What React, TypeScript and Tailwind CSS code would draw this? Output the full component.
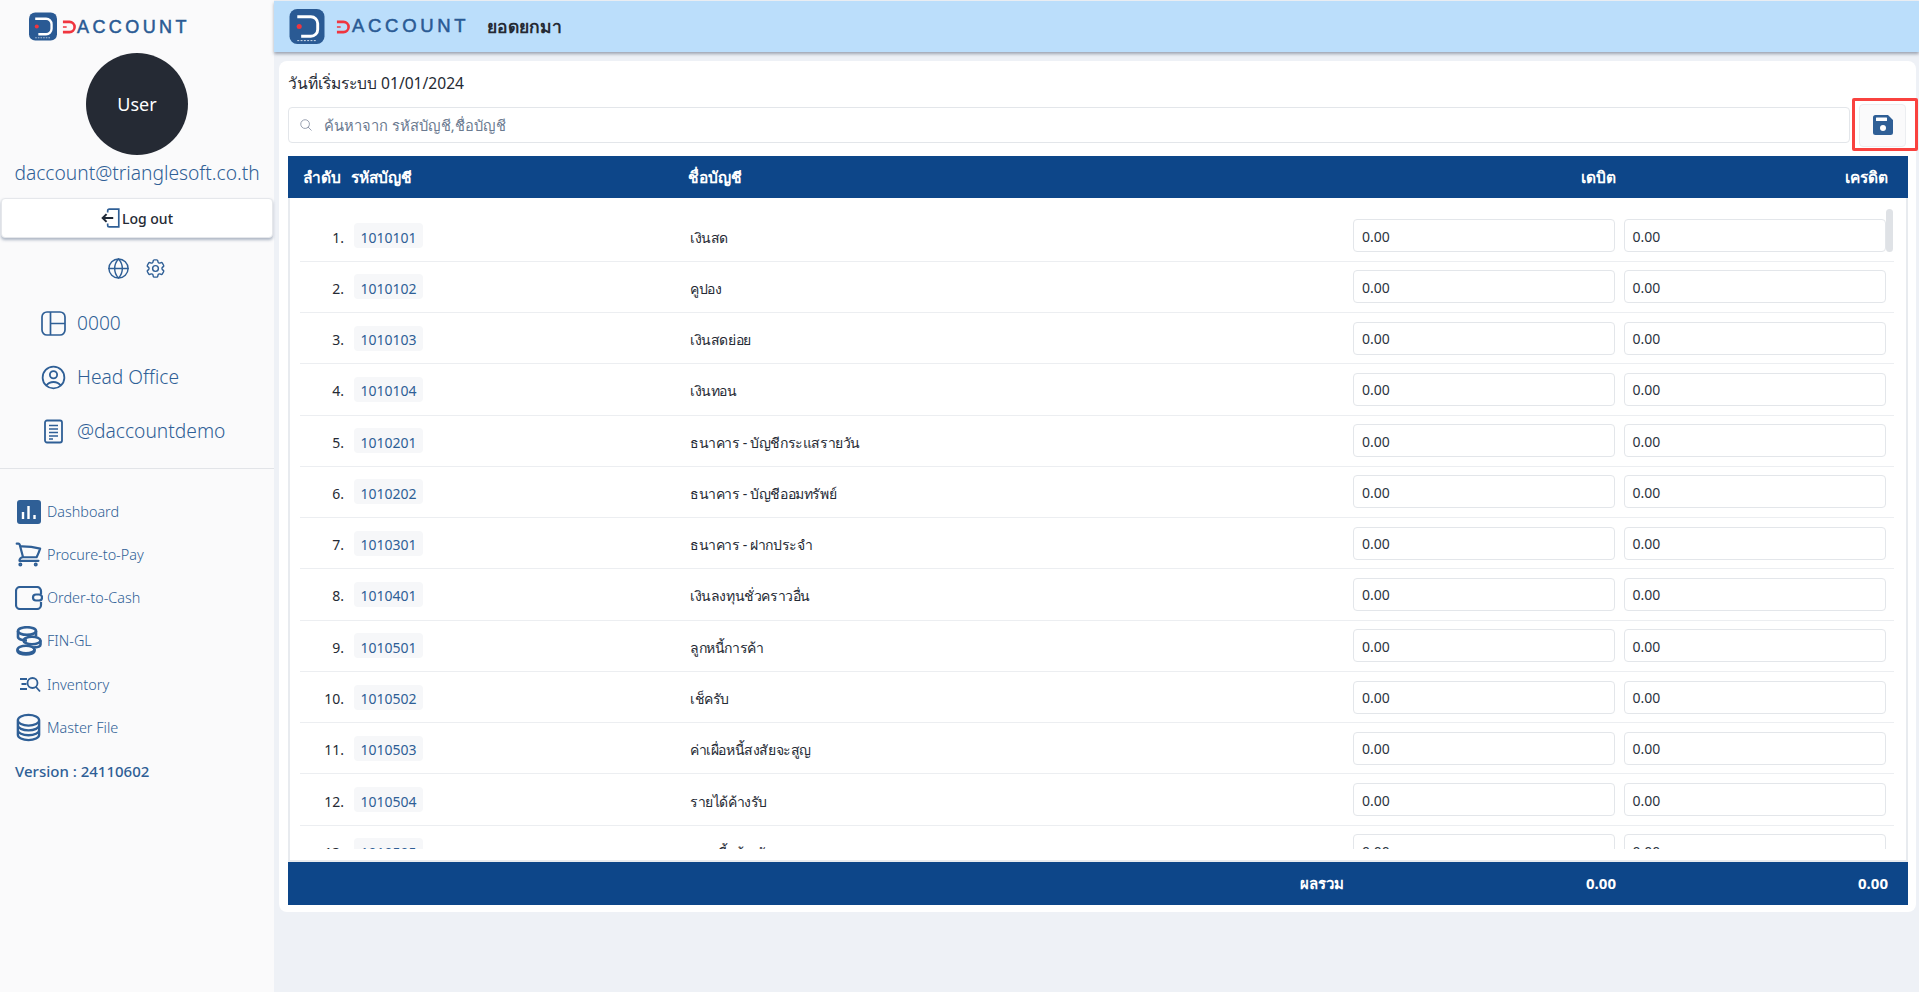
import { Globe } from 'lucide-react'
import {
  HiOutlineCircleStack,
  HiOutlineCog6Tooth,
  HiOutlineMagnifyingGlass,
  HiOutlineShoppingCart,
  HiOutlineUserCircle,
} from 'react-icons/hi2'

const accounts = [
  ['1010101', 'เงินสด'],
  ['1010102', 'คูปอง'],
  ['1010103', 'เงินสดย่อย'],
  ['1010104', 'เงินทอน'],
  ['1010201', 'ธนาคาร - บัญชีกระแสรายวัน'],
  ['1010202', 'ธนาคาร - บัญชีออมทรัพย์'],
  ['1010301', 'ธนาคาร - ฝากประจำ'],
  ['1010401', 'เงินลงทุนชั่วคราวอื่น'],
  ['1010501', 'ลูกหนี้การค้า'],
  ['1010502', 'เช็ครับ'],
  ['1010503', 'ค่าเผื่อหนี้สงสัยจะสูญ'],
  ['1010504', 'รายได้ค้างรับ'],
  ['1010505', 'ดอกเบี้ยค้างรับ'],
]

function LogoMark({ className }: { className: string }) {
  return (
    <svg viewBox="0 0 36 36" className={className}>
      <rect width="36" height="36" rx="8" fill="#2a5a94" />
      <path d="M8 8h14a7 7 0 0 1 7 7v6a7 7 0 0 1-7 7H12" fill="none" stroke="#fff" strokeWidth="3" />
      <circle cx="10" cy="18" r="2.600" fill="#f0353f" />
      <path d="M8 32.500h20" stroke="#fff" strokeWidth="1" strokeDasharray="2 1.400" opacity="0.8" />
    </svg>
  )
}

function Wordmark({ large }: { large?: boolean }) {
  return (
    <div className="flex items-center" aria-label="DACCOUNT">
      <svg viewBox="0 0 15 14" className="h-[14px] w-[14px]">
        <path d="M1 1.500h7a5.500 5.500 0 0 1 0 11H1" fill="none" stroke="#f0353f" strokeWidth="2.800" />
        <path d="M1 7h4" stroke="#f0353f" strokeWidth="1.600" />
      </svg>
      <span
        className={
          large
            ? "ml-[2px] font-['Liberation_Sans',sans-serif] text-[18.5px] leading-none tracking-[0.2em] text-[#2a5a94] [-webkit-text-stroke:0.5px_#2a5a94]"
            : "ml-[1px] font-['Liberation_Sans',sans-serif] text-[18px] leading-none tracking-[0.19em] text-[#2a5a94] [-webkit-text-stroke:0.5px_#2a5a94]"
        }
      >
        ACCOUNT
      </span>
    </div>
  )
}

function BranchIcon() {
  return (
    <svg viewBox="0 0 25 25" className="h-[25px] w-[25px]" fill="none" stroke="#2f5f96" strokeWidth="1.700">
      <rect x="1" y="1" width="23" height="23" rx="5" />
      <path d="M9.500 1v23M9.500 12.500H24" />
    </svg>
  )
}

function DocIcon() {
  return (
    <svg viewBox="0 0 25 25" className="h-[25px] w-[25px]" fill="none" stroke="#2f5f96" strokeWidth="1.800">
      <rect x="4" y="1.500" width="17" height="22" rx="2" />
      <path d="M8 6.500h9M8 10h9M8 13.500h9M8 17h9M8 20h4" strokeWidth="1.500" />
    </svg>
  )
}

function DashboardIcon() {
  return (
    <svg viewBox="0 0 24 24" className="h-6 w-6">
      <rect width="24" height="24" rx="3" fill="#2f5f96" />
      <path d="M6 12v7M11.500 6v13M17.500 15v4" stroke="#fff" strokeWidth="2.400" />
    </svg>
  )
}

function WalletIcon() {
  return (
    <svg viewBox="0 0 28 24" className="h-6 w-[28px]" fill="none" stroke="#2f5f96" strokeWidth="2.200">
      <path d="M26 8V5a4 4 0 0 0-4-4H5a4 4 0 0 0-4 4v14a4 4 0 0 0 4 4h17a4 4 0 0 0 4-4v-3" />
      <rect x="18" y="8.500" width="9" height="6" rx="3" />
    </svg>
  )
}

function CoinsIcon() {
  return (
    <svg viewBox="0 0 26 30" className="h-[30px] w-[26px]" fill="none" stroke="#2f5f96" strokeWidth="2.600">
      <ellipse cx="11" cy="5" rx="9" ry="3.800" />
      <path d="M2 5v6c0 2 4 3.500 9 3.500" />
      <path d="M20 5v5" />
      <ellipse cx="16" cy="14.500" rx="8.500" ry="3.800" />
      <path d="M24.500 14.500v4c0 2-4 3-8 3" />
      <ellipse cx="10" cy="23.500" rx="8.500" ry="3.800" />
      <path d="M1.500 23.500v1.500c0 2 4 3.500 8.500 3.500s8.500-1.500 8.500-3.500v-2" />
    </svg>
  )
}

function InventoryIcon() {
  return (
    <svg viewBox="0 0 24 24" className="h-6 w-6" fill="none" stroke="#2f5f96" strokeWidth="1.800">
      <path d="M3 7h7M4.500 12h5M3 17h7" />
      <circle cx="15.500" cy="11" r="5" />
      <path d="M19 15l4 4.500" />
    </svg>
  )
}

function LogoutIcon() {
  return (
    <svg viewBox="0 0 18 18" className="h-[20px] w-[20px]" fill="none" stroke="#1f2937" strokeWidth="1.500">
      <path d="M6 4V2.500a1.500 1.500 0 0 1 1.500-1.500H16v16H7.500A1.500 1.500 0 0 1 6 15.500V14" stroke="#2f5f96" />
      <path d="M11 9H1.500M5 5.500 1.500 9 5 12.500" strokeWidth="1.800" />
    </svg>
  )
}

function SaveIcon() {
  return (
    <svg viewBox="0 0 20 20" className="h-[20px] w-[20px]">
      <path
        d="M2.500 0H15l5 5v12.500a2.500 2.500 0 0 1-2.500 2.500h-15A2.500 2.500 0 0 1 0 17.500v-15A2.500 2.500 0 0 1 2.500 0Z"
        fill="#2f5f96"
      />
      <rect x="3" y="2.500" width="11" height="3.500" rx="0.500" fill="#fff" />
      <circle cx="10" cy="13" r="3" fill="#fff" />
    </svg>
  )
}

const infoRows = [
  { icon: <BranchIcon />, label: '0000' },
  { icon: <HiOutlineUserCircle className="h-[29px] w-[29px] -mx-[2px] text-[#2f5f96]" />, label: 'Head Office' },
  { icon: <DocIcon />, label: '@daccountdemo' },
]

const navRows = [
  { icon: <DashboardIcon />, label: 'Dashboard' },
  { icon: <HiOutlineShoppingCart strokeWidth={1.8} className="h-[29px] w-[29px] -mx-[3px] text-[#2f5f96]" />, label: 'Procure-to-Pay' },
  { icon: <WalletIcon />, label: 'Order-to-Cash' },
  { icon: <CoinsIcon />, label: 'FIN-GL' },
  { icon: <InventoryIcon />, label: 'Inventory' },
  { icon: <HiOutlineCircleStack strokeWidth={1.8} className="h-[31px] w-[31px] -mx-[4px] text-[#2f5f96]" />, label: 'Master File' },
]

function AmountInput() {
  return (
    <div className="flex h-[33px] items-center rounded-[4px] border border-[#e3e6ea] bg-white px-[8px] pt-[1px] text-[14px] text-[#2b3340]">
      0.00
    </div>
  )
}

function Sidebar() {
  return (
    <aside className="flex h-full w-[274px] shrink-0 flex-col bg-[#fafafb]">
      <div className="ml-[29px] mt-[12px] flex items-center gap-[5px]">
        <LogoMark className="h-[29px] w-[28px]" />
        <Wordmark />
      </div>

      <div className="mx-auto mt-[12px] flex h-[102px] w-[102px] items-center justify-center rounded-full bg-[#252a34] text-[18px] text-white">
        User
      </div>
      <div className="mt-[4px] h-[28px] whitespace-nowrap text-center text-[19.2px] font-light leading-[28px] text-[#2f5f96]">
        daccount@trianglesoft.co.th
      </div>

      <button className="ml-[1px] mt-[11px] flex h-[40px] w-[272px] items-center justify-center gap-[1px] rounded-[4px] border border-[#e5e7eb] bg-white text-[14px] font-medium text-[#252a34] shadow-[0_2px_3px_rgba(80,100,130,0.45)]">
        <LogoutIcon />
        Log out
      </button>

      <div className="mt-[19px] flex h-[22px] items-center justify-center gap-[14px] text-[#2f5f96]">
        <Globe className="h-[23px] w-[23px]" strokeWidth={1.5} />
        <HiOutlineCog6Tooth className="h-[23px] w-[23px]" />
      </div>

      <div className="mt-[17px] flex flex-col pl-[41px]">
        {infoRows.map((r) => (
          <div key={r.label} className="flex h-[54px] items-center gap-[11px] text-[19.2px] font-light text-[#2f5f96]">
            {r.icon}
            {r.label}
          </div>
        ))}
      </div>

      <div className="mt-[10px] border-t border-[#e2e4e8]" />

      <div className="mt-[21px] flex flex-col">
        {navRows.map((r) => (
          <div key={r.label} className="flex h-[43.2px] items-center text-[14.4px] font-light text-[#2f5f96]">
            <div className="flex w-[47px] shrink-0 justify-center pl-[13px] pr-[3px]">{r.icon}</div>
            {r.label}
          </div>
        ))}
      </div>

      <div className="ml-[15px] mt-[11px] text-[15px] font-medium text-[#2f5f96]">Version : 24110602</div>
    </aside>
  )
}

export default function App() {
  return (
    <div className="flex h-[992px] overflow-hidden bg-[#eef1f6] font-['Noto_Sans',sans-serif]">
      <Sidebar />

      <main className="flex min-w-0 flex-1 flex-col">
        <header className="mt-[1px] flex h-[51px] shrink-0 items-center bg-[#bbdefb] pl-[15px] shadow-[0_2px_3px_rgba(90,100,120,0.55)]">
          <LogoMark className="h-[35px] w-[36px]" />
          <div className="ml-[11px]">
            <Wordmark large />
          </div>
          <div className="ml-[18px] text-[17.5px] font-semibold text-[#252a34]">ยอดยกมา</div>
        </header>

        <section className="relative ml-[4.5px] mt-[9px] h-[851px] w-[1637px] rounded-[8px] bg-white px-[9.5px]">
          <div className="mt-[11px] h-[24px] text-[15.6px] leading-[22px] text-[#252a34]">วันที่เริ่มระบบ 01/01/2024</div>

          <div className="mt-[11px] flex h-[36px] items-center">
            <div className="flex h-full w-[1562px] items-center rounded-[4px] border border-[#e3e6ea] bg-white pl-[10px] text-[14.7px] text-[#6b7a90]">
              <HiOutlineMagnifyingGlass className="h-[14px] w-[14px] text-[#8a94a6]" />
              <span className="ml-[11px]">ค้นหาจาก รหัสบัญชี,ชื่อบัญชี</span>
            </div>
            <button className="ml-[9px] flex h-[43px] w-[47px] items-center justify-center rounded-[4px] border border-[#eceef1] bg-[#fafafb]">
              <SaveIcon />
            </button>
          </div>

          {/* red highlight around the save button */}
          <div className="absolute left-[1573px] top-[37px] h-[53px] w-[66px] rounded-[2px] border-[3px] border-[#f9423f]" />

          <div className="mt-[13px] flex h-[42px] w-[1620px] items-center bg-[#0d4689] pt-[2px] text-[15.5px] font-bold text-white">
            <div className="ml-[14.5px] w-[48px]">ลำดับ</div>
            <div className="w-[337px]">รหัสบัญชี</div>
            <div className="flex-1">ชื่อบัญชี</div>
            <div className="w-[261px] text-right">เดบิต</div>
            <div className="w-[292px] pr-[20px] text-right">เครดิต</div>
          </div>

          <div className="relative h-[664px] w-[1620px] border-b-2 border-l-2 border-r-2 border-[#e8ebef]">
            <div className="h-[651px] overflow-hidden pl-[10px] pt-[12.5px]">
              {accounts.map(([code, name], i) => (
                <div key={code} className="flex h-[51.27px] w-[1594px] items-center border-b border-[#eceef1] text-[14px] text-[#252a34]">
                  <div className="w-[44px] shrink-0 pt-[3px] text-right">{i + 1}.</div>
                  <div className="ml-[10px] flex h-[25px] w-[69px] shrink-0 items-center justify-center rounded-[4px] bg-[#f6f7f9] pt-[3px] text-[#2f5f96]">
                    {code}
                  </div>
                  <div className="ml-[267px] flex-1 pt-[3px] tracking-[-0.4px]">{name}</div>
                  <div className="w-[262px] shrink-0">
                    <AmountInput />
                  </div>
                  <div className="ml-[8.5px] mr-[8.5px] w-[262px] shrink-0">
                    <AmountInput />
                  </div>
                </div>
              ))}
            </div>
            {/* scrollbar thumb */}
            <div className="absolute right-[13px] top-[11px] h-[43px] w-[7px] rounded-full bg-[#dfe2e6]" />
          </div>

          <div className="flex h-[43px] w-[1620px] items-center bg-[#0d4689] text-[15px] font-bold text-white">
            <div className="w-[1056px] text-right">ผลรวม</div>
            <div className="w-[272px] text-right">0.00</div>
            <div className="w-[272px] text-right">0.00</div>
          </div>
        </section>
      </main>
    </div>
  )
}
